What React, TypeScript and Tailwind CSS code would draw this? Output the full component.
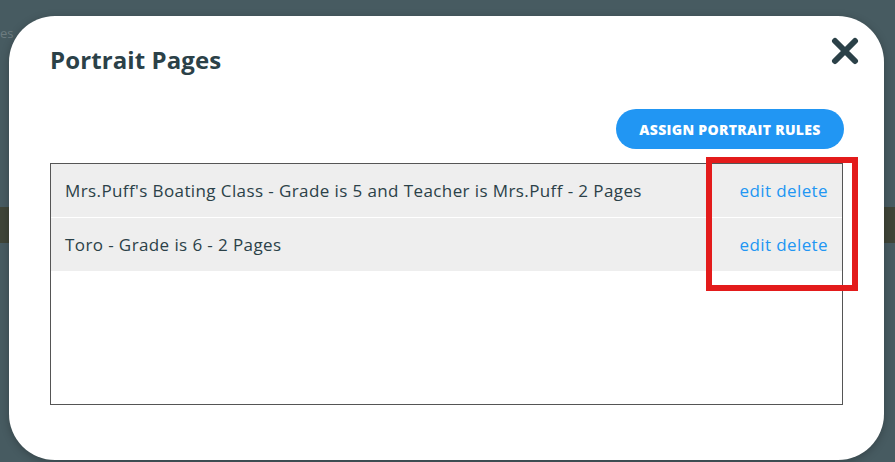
import React from 'react';

const rules = [
  { id: 1, label: "Mrs.Puff's Boating Class - Grade is 5 and Teacher is Mrs.Puff - 2 Pages" },
  { id: 2, label: 'Toro - Grade is 6 - 2 Pages' },
];

const CloseIcon = () => (
  <svg width="28" height="28" viewBox="0 0 28 28" fill="none">
    <path d="M4 4 L24 24 M24 4 L4 24" stroke="#2b4148" strokeWidth="6" strokeLinecap="round" />
  </svg>
);

const App = () => {
  return (
    <div
      className="relative w-[895px] h-[462px] overflow-hidden bg-[#475b61]"
      style={{ fontFamily: '"Open Sans", Lato, sans-serif' }}
    >
      {/* dimmed page behind the modal */}
      <div className="flex flex-col">
        <div className="h-[36px] pt-[27px] text-[13px] leading-none text-[#6d7c80]">
          <span>es</span>
        </div>
        <div className="mt-[171px] h-[36px] bg-[#3f4538]" />
      </div>

      {/* modal */}
      <div className="absolute left-[9px] top-[16px] w-[875px] h-[444px] rounded-[46px] bg-white shadow-[0_2px_8px_rgba(0,0,0,0.25)] px-[41px]">
        <div className="flex items-start justify-between pt-[28px]">
          <h2 className="text-[24px] font-bold leading-[32px] text-[#2b4148] tracking-[0.1px]">Portrait Pages</h2>
          <button className="mt-[-7px] mr-[-16px]">
            <CloseIcon />
          </button>
        </div>

        <div className="flex justify-end mt-[33px]">
          <button className="h-[40px] w-[228px] mr-[-1px] rounded-full bg-[#2196f3] text-white text-[14px] font-extrabold tracking-[0.3px] uppercase">
            Assign Portrait Rules
          </button>
        </div>

        <div className="mt-[14px] h-[242px] border border-[#555555]">
          {rules.map((r) => (
            <div
              key={r.id}
              className="flex items-center justify-between h-[54px] px-[14px] bg-[#eeeeee] border-b border-white text-[17px] tracking-[0.4px] text-[#2b4148]"
            >
              <span>{r.label}</span>
              <span className="text-[#2196f3]">
                <a className="cursor-pointer">edit</a> <a className="cursor-pointer">delete</a>
              </span>
            </div>
          ))}
        </div>
      </div>

      {/* annotation */}
      <div className="absolute left-[706px] top-[157px] w-[152px] h-[134px] border-[6px] border-[#e31b1b]" />
    </div>
  );
};

export default App;
